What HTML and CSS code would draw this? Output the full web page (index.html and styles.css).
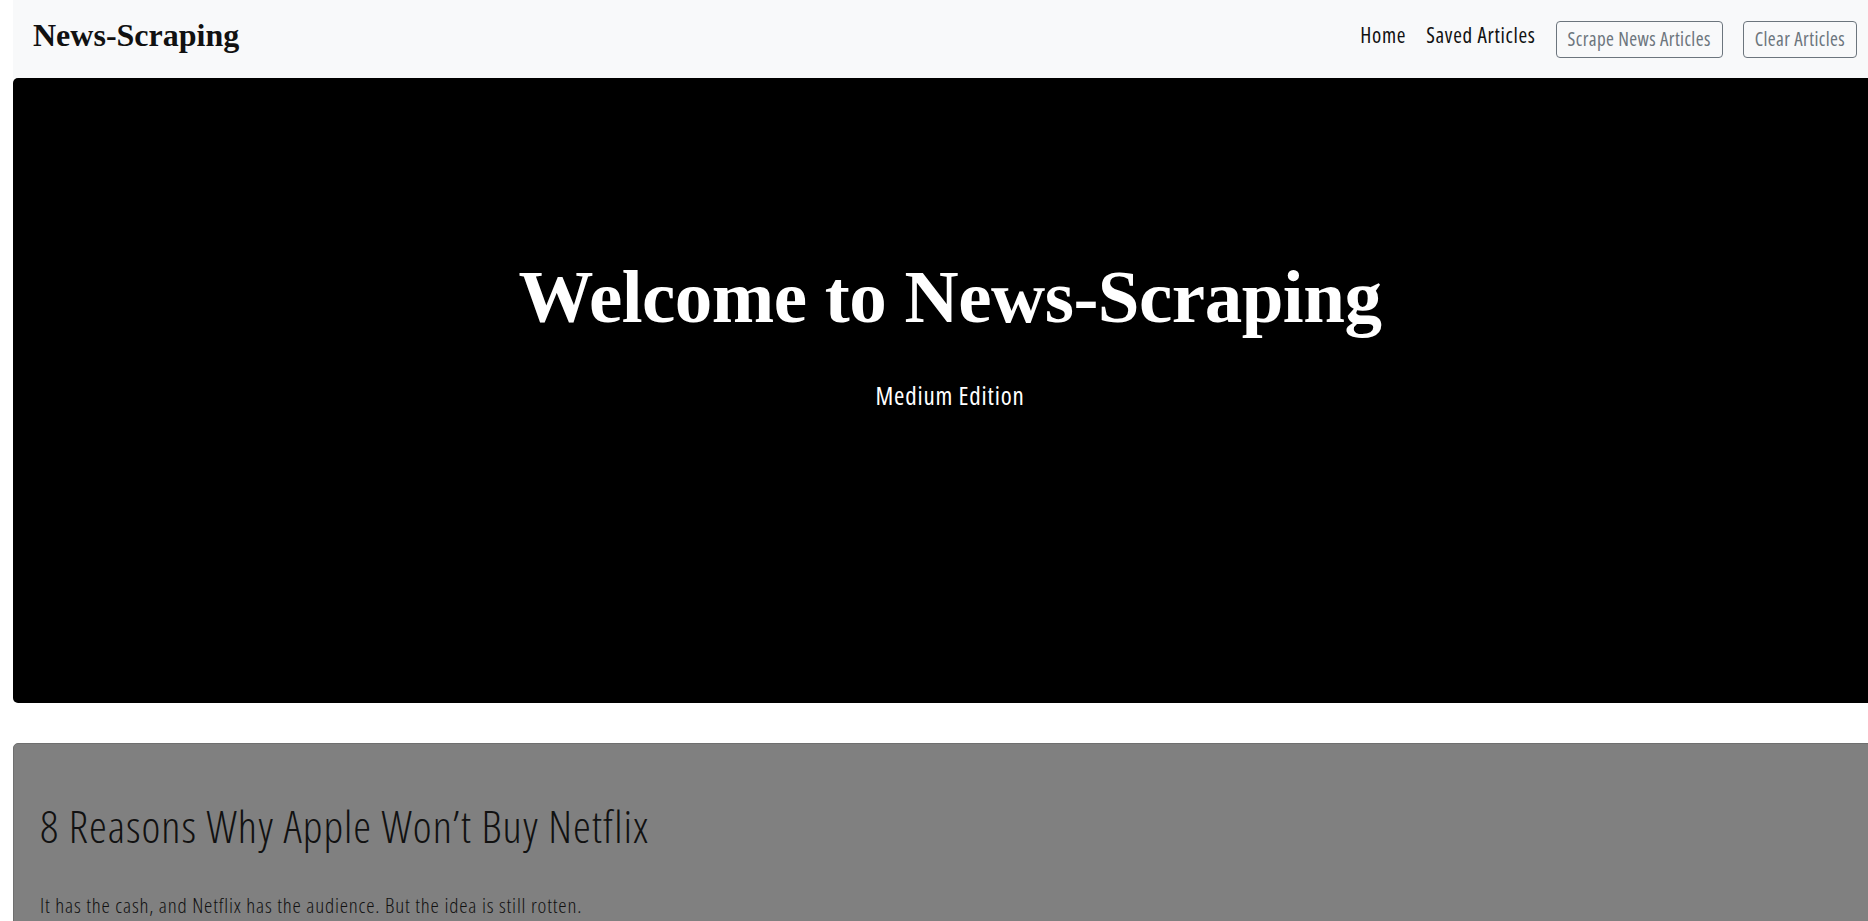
FILE: index.html
```html
<!DOCTYPE html>
<html lang="en">
<head>
<meta charset="utf-8">
<title>News-Scraping</title>
<link rel="stylesheet" href="styles.css">
</head>
<body>
<div class="page">
  <nav class="navbar">
    <a class="brand" href="#">News-Scraping</a>
    <div class="nav-right">
      <a class="nav-link" href="#">Home</a>
      <a class="nav-link" href="#">Saved Articles</a>
      <button class="btn">Scrape News Articles</button>
      <button class="btn">Clear Articles</button>
    </div>
  </nav>
  <header class="hero">
    <h1 class="hero-title">Welcome to News-Scraping</h1>
    <p class="hero-lead">Medium Edition</p>
  </header>
  <section class="card">
    <h2 class="card-title">8 Reasons Why Apple Won’t Buy Netflix</h2>
    <p class="card-text">It has the cash, and Netflix has the audience. But the idea is still rotten.</p>
  </section>
</div>
</body>
</html>
```
FILE: styles.css
```css
html, body {
  margin: 0;
  padding: 0;
  overflow-x: hidden;
  background: #fff;
}
body {
  font-family: "Open Sans", "Liberation Sans", sans-serif;
  font-stretch: 75%;
  color: #212529;
}
.page {
  width: 1874px;
  padding-left: 13px;
}
.navbar {
  height: 78px;
  background: #f8f9fa;
  display: flex;
  align-items: center;
  justify-content: space-between;
  padding: 0 30px 0 20px;
  box-sizing: border-box;
}
.brand {
  font-family: "Liberation Serif", "Times New Roman", serif;
  font-stretch: normal;
  font-weight: bold;
  font-size: 32px;
  color: #111;
  text-decoration: none;
  margin-top: -8px;
}
.nav-right {
  display: flex;
  align-items: center;
}
.nav-link {
  font-size: 21px;
  letter-spacing: 0.7px;
  color: #111;
  text-decoration: none;
  padding: 0 10px;
  margin-top: -8px;
}
.btn {
  font-family: inherit;
  font-stretch: 75%;
  font-size: 19px;
  letter-spacing: 0.4px;
  line-height: 27px;
  color: #6c757d;
  background: transparent;
  border: 1px solid #6c757d;
  border-radius: 4px;
  padding: 4px 11px;
  margin-left: 10px;
  height: 37px;
}
.btn + .btn { margin-left: 20px; }
.hero {
  background: #000;
  border-radius: 5px;
  height: 625px;
  color: #fff;
  text-align: center;
  box-sizing: border-box;
  padding-top: 174px;
}
.hero-title {
  font-family: "Liberation Serif", "Times New Roman", serif;
  font-stretch: normal;
  font-weight: bold;
  font-size: 75px;
  line-height: 1.2;
  margin: 0;
  letter-spacing: -0.5px;
}
.hero-lead {
  font-size: 25px;
  letter-spacing: 0.8px;
  margin: 36px 0 0;
}
.card {
  margin-top: 40px;
  background: #808080;
  border: 1px solid #6f6f6f;
  border-radius: 5px;
  padding: 55px 26px 40px;
  min-height: 300px;
}
.card-title {
  font-weight: 300;
  font-size: 45px;
  letter-spacing: 1px;
  line-height: 1.2;
  margin: 0 0 38px;
  color: #111;
}
.card-text {
  font-weight: 300;
  font-size: 21px;
  letter-spacing: 0.8px;
  margin: 0;
  color: #111;
}
```
